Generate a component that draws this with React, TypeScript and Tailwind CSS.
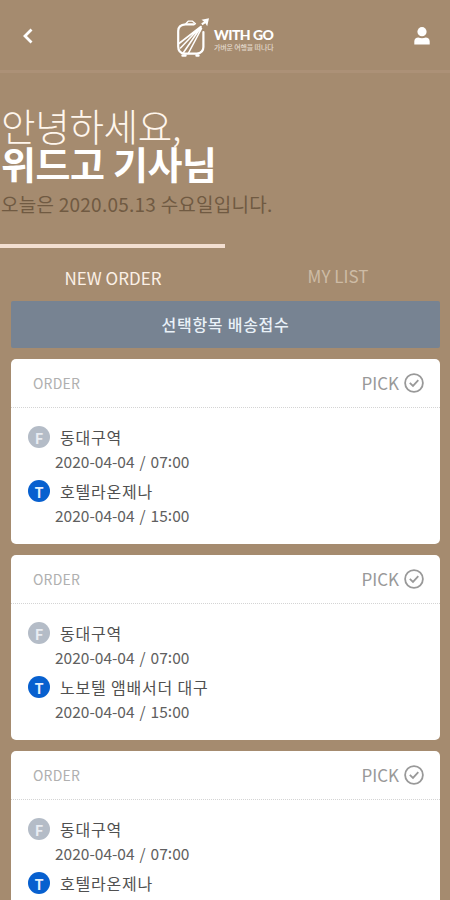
type Stop = { place: string; date: string; hour: string; minute: string };
type Order = { from: Stop; to: Stop };

const stop = (place: string, hour: string): Stop => ({ place, date: "2020-04-04", hour, minute: "00" });

const orders: Order[] = [
  { from: stop("동대구역", "07"), to: stop("호텔라온제나", "15") },
  { from: stop("동대구역", "07"), to: stop("노보텔 앰배서더 대구", "15") },
  { from: stop("동대구역", "07"), to: stop("호텔라온제나", "15") },
];

function Logo() {
  return (
    <div className="flex items-center">
      <svg width="40" height="46" viewBox="0 0 40 46" fill="none" stroke="#fff" strokeLinecap="round" strokeLinejoin="round">
        <path d="M16 11.5L18.2 9.2H22.5L25.5 11.8" strokeWidth="1.3" />
        <path d="M24 12.3H15.5Q8.2 12.8 8.2 19V34.5Q8.2 41 14.5 41.6H26.8Q33.4 41 33.4 35V20" strokeWidth="2.2" />
        <path d="M12.5 43.5H15.5M26.5 43.5H28.5" strokeWidth="2.4" />
        <path d="M9 31.5L31 14.5L10.5 36M31 15L13.5 40.5M31.5 16.5L18.5 41" strokeWidth="1.6" />
        <path d="M31.5 7.8L39 6.3L37.2 14.3L35.4 11.2L32.4 13.2L31.2 11.6L34 9.4Z" fill="#fff" stroke="none" />
      </svg>
      <div className="ml-[4px] flex flex-col pt-[9px]">
        <span className="whitespace-nowrap font-[Lato,sans-serif] text-[14px] leading-[14px] font-black tracking-[-0.55px] text-white">WITH GO</span>
        <span className="whitespace-nowrap text-[7px] leading-[10px] font-medium tracking-[-0.15px] text-[#e3d8cb]">가벼운 여행을 떠나다</span>
      </div>
    </div>
  );
}

function StopRow({ stop, letter, color }: { stop: Stop; letter: string; color: string }) {
  return (
    <div className="h-[54px]">
      <div className="flex h-[24px] items-center">
        <span className={`flex h-[22px] w-[22px] items-center justify-center rounded-full pt-[3px] font-[Roboto,sans-serif] text-[14px] leading-none font-bold ${color}`}>
          {letter}
        </span>
        <span className="ml-[10px] whitespace-nowrap text-[16px] leading-[24px] tracking-[0.8px] text-[#505050]">{stop.place}</span>
      </div>
      <div className="ml-[27px] whitespace-nowrap text-[15.5px] leading-[24px] text-[#606060] [word-spacing:1.5px]">
        {stop.date} / {stop.hour}
        <span className="relative -top-[1.5px]">:</span>
        {stop.minute}
      </div>
    </div>
  );
}

function OrderCard({ order }: { order: Order }) {
  return (
    <article className="h-[185px] shrink-0 rounded-[5px] bg-white">
      <div className="flex h-[49px] items-center justify-between border-b border-dotted border-[#d4d4d4] pr-[16px] pl-[22px]">
        <span className="text-[14px] leading-[20px] tracking-[0.2px] text-[#b0b0b0]">ORDER</span>
        <div className="flex items-center text-[#999999]">
          <span className="mr-[5px] text-[17px] leading-[20px]">PICK</span>
          <svg width="20" height="20" viewBox="0 0 20 20" fill="none" stroke="currentColor" strokeWidth="1.8">
            <circle cx="10" cy="10" r="8.9" />
            <path d="M5.8 9.8L9 12.9L14.3 7.2" />
          </svg>
        </div>
      </div>
      <div className="pt-[17px] pl-[17px]">
        <StopRow stop={order.from} letter="F" color="bg-[#b4bcc7] text-[#e9edf3]" />
        <StopRow stop={order.to} letter="T" color="bg-[#0760cf] text-[#e4f0fd]" />
      </div>
    </article>
  );
}

export default function App() {
  return (
    <main className="h-[900px] w-[450px] overflow-hidden bg-[#a58b6f] font-['Noto_Sans_CJK_KR',sans-serif]">
      <header className="flex h-[73px] items-center border-b-3 border-[#ac9177] pr-[20px] pl-[22px]">
        <svg width="11" height="16" viewBox="0 0 11 16" fill="none" stroke="#fff" strokeWidth="2.8" className="mt-[2px]">
          <path d="M9.5 1.5L3 8L9.5 14.5" />
        </svg>
        <div className="ml-[137px]">
          <Logo />
        </div>
        <svg width="16" height="18" viewBox="0 0 16 18" fill="#fff" className="mt-[2px] ml-auto">
          <circle cx="8" cy="4.7" r="4.6" />
          <path d="M0.3 17.5V14.5C0.3 11.8 2 10.6 4.4 10.4C6.4 11.4 9.6 11.4 11.6 10.4C14 10.6 15.7 11.8 15.7 14.5V17.5Z" />
        </svg>
      </header>
      <section className="h-[171px] pt-[33px]">
        <h1 className="whitespace-nowrap text-white">
          <span className="block pl-px text-[37.5px] leading-[38px] font-light tracking-[-0.3px] text-[#fff6ed]">안녕하세요,</span>
          <span className="block pl-px text-[38px] leading-[38px] font-bold tracking-[-0.4px]">위드고 기사님</span>
        </h1>
        <p className="mt-[9px] whitespace-nowrap pl-px text-[19px] leading-[26px] tracking-[0.25px] text-[#705a42]">오늘은 2020.05.13 수요일입니다.</p>
      </section>
      <nav className="grid h-[57px] grid-cols-2 text-center text-[17px]">
        <span className="border-t-4 border-[#f3dfd1] pt-[16px] pl-px leading-[28px] text-[#fbf0e6]">NEW ORDER</span>
        <span className="pt-[18px] pl-px leading-[28px] text-[#cdbba5]">MY LIST</span>
      </nav>
      <div className="flex flex-col pr-[10px] pl-[11px]">
        <button className="h-[47px] rounded-[2px] bg-[#778392] pb-[2px] text-[16px] font-medium tracking-[0.75px] text-[#e9f1f8]">선택항목 배송접수</button>
        <div className="mt-[11px] flex flex-col gap-[11px]">
          {orders.map((order, i) => (
            <OrderCard key={i} order={order} />
          ))}
        </div>
      </div>
    </main>
  );
}
